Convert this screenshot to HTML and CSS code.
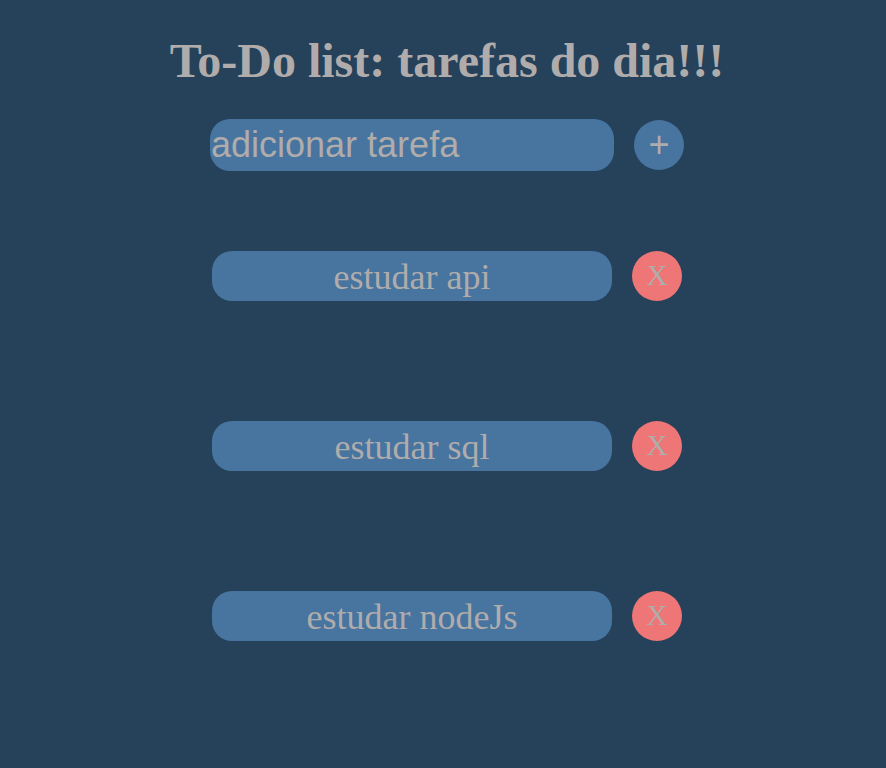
FILE: index.html
```html
<!DOCTYPE html>
<html lang="pt-BR">
<head>
<meta charset="utf-8">
<title>To-Do list</title>
<link rel="stylesheet" href="styles.css">
</head>
<body>
<main class="page">
  <h1 class="title">To-Do list: tarefas do dia!!!</h1>
  <form class="row add-row">
    <input class="field" type="text" placeholder="adicionar tarefa" aria-label="adicionar tarefa">
    <button class="round add" type="button">+</button>
  </form>
  <ul class="tasks">
    <li class="row"><span class="task">estudar api</span><button class="round remove" type="button">X</button></li>
    <li class="row"><span class="task">estudar sql</span><button class="round remove" type="button">X</button></li>
    <li class="row"><span class="task">estudar nodeJs</span><button class="round remove" type="button">X</button></li>
  </ul>
</main>
</body>
</html>
```
FILE: styles.css
```css
* {
  box-sizing: border-box;
}

body {
  margin: 0;
  background: #26415a;
  color: #b0acab;
  font-family: "Liberation Serif", "Times New Roman", serif;
}

.page {
  padding: 32px 0 0 8px;
}

.title {
  margin: 0 0 30px;
  font-size: 48px;
  line-height: 57px;
  text-align: center;
}

.row {
  display: flex;
  justify-content: center;
  align-items: center;
  gap: 20px;
}

.add-row {
  margin-bottom: 80px;
}

.field {
  width: 404px;
  height: 52px;
  padding: 0 1px;
  border: 0;
  border-radius: 20px;
  background: #4775a0;
  color: inherit;
  font: 36px "Liberation Sans", Arial, sans-serif;
}

.field::placeholder {
  color: inherit;
  opacity: 1;
}

.tasks {
  display: flex;
  flex-direction: column;
  gap: 120px;
  margin: 0;
  padding: 0;
  list-style: none;
}

.task {
  width: 400px;
  height: 50px;
  border-radius: 20px;
  background: #4775a0;
  font-size: 36px;
  line-height: 52px;
  text-align: center;
}

.round {
  width: 50px;
  height: 50px;
  padding: 0;
  border: 0;
  border-radius: 50%;
  color: inherit;
}

.add {
  background: #4775a0;
  font: 36px "Liberation Sans", Arial, sans-serif;
}

.remove {
  padding-bottom: 2px;
  background: #ef7676;
  font: 30px "Liberation Serif", "Times New Roman", serif;
}
```
